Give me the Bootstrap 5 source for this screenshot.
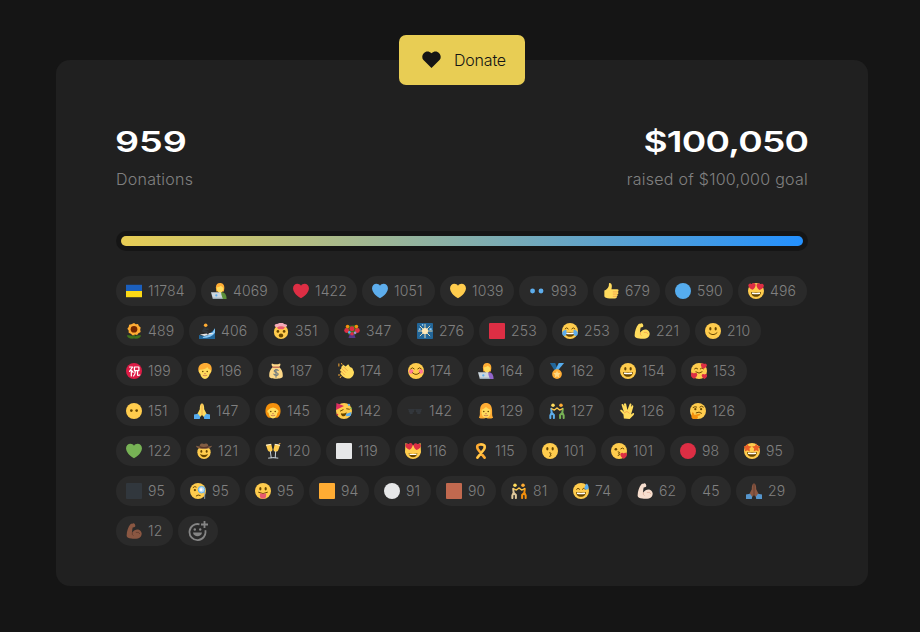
<!DOCTYPE html>
<html lang="en">
<head>
<meta charset="utf-8">
<meta name="viewport" content="width=device-width, initial-scale=1">
<title>Donations</title>
<link href="https://cdn.jsdelivr.net/npm/bootstrap@5.3.0/dist/css/bootstrap.min.css" rel="stylesheet">
<style>
  body { background: #151515; font-family: Inter, "Liberation Sans", sans-serif; font-weight: 300; color: #808080; padding: 60px 52px 46px 56px; overflow: hidden; }
  .panel { width: 812px; height: 526px; background: #202020; border-radius: 14px; padding: 0 60px; }
  .btn-donate { --bs-btn-bg: #e8cd54; --bs-btn-color: #151515; --bs-btn-border-width: 0; --bs-btn-border-radius: 7px; --bs-btn-hover-bg: #f0d860; width: 126px; height: 50px; margin-top: -25px; font-size: 16px; font-weight: 300; letter-spacing: -.2px; }
  .btn.btn-donate { padding: 0 0 1px 4px; }
  .btn-donate svg { width: 19px; height: 17px; margin-right: 13px; }
  .stats { padding-top: 39px; }
  .figure-num { color: #fff; font-weight: 620; font-size: 29px; line-height: 36px; display: block; white-space: nowrap; }
  .figure-num.start { transform: scaleX(1.3); transform-origin: left; margin-left: -1px; }
  .figure-num.end { transform: scaleX(1.28); transform-origin: right; letter-spacing: -.6px; }
  .figure-label { font-size: 16px; line-height: 24px; margin-top: 7px; letter-spacing: .26px; }
  .meter { height: 20px; padding: 5px; background: #151515; border-radius: 10px; margin-top: 40px; }
  .meter .progress-bar { height: 10px; border-radius: 5px; background: linear-gradient(90deg, #e8cd54, #2491ff); }
  .reactions { margin-top: 25px; column-gap: 5px; row-gap: 10px; }
  .chip { height: 30px; padding: 0 0 1px 10.300px; border-radius: 15px; background: #2a2a2a; font-size: 14px; letter-spacing: .15px; }
  .chip svg { width: 16px; height: 16px; margin: 1px 5.700px 0 0; flex: none; }
  .chip .add-icon { width: 20px; height: 20px; margin: 1px 0 0 -.5px; }
</style>
</head>
<body>
<main class="panel d-flex flex-column">
  <button type="button" class="btn btn-donate align-self-center d-flex align-items-center justify-content-center">
    <svg viewBox="0 0 20 18"><path fill="#151515" d="M10 18 1.500 9.600C-2.600 4.800 4.200-3.300 10 2.300c5.800-5.600 12.600 2.500 8.500 7.300z"/></svg>
    <span>Donate</span>
  </button>
  <div class="stats d-flex justify-content-between">
    <div><span class="figure-num start">959</span><div class="figure-label">Donations</div></div>
    <div class="text-end"><span class="figure-num end">$100,050</span><div class="figure-label">raised of $100,000 goal</div></div>
  </div>
  <div class="meter"><div class="progress-bar w-100" role="progressbar" aria-label="Goal progress"></div></div>
  <div class="reactions d-flex flex-wrap" id="reactions"></div>
</main>
<script>
const ball = '<circle cx="18" cy="18" r="18" fill="#ffcc4d"/>';
const eyes = '<g fill="#664500"><ellipse cx="12" cy="13" rx="2.500" ry="4"/><ellipse cx="24" cy="13" rx="2.500" ry="4"/></g>';
const grin = '<path fill="#664500" d="M7 20q11 3 22 0c0 6-4 11-11 11S7 26 7 20z"/><path fill="#fff" d="M9 21.500q9 2 18 0v3q-9 2-18 0z"/>';
const stroke = (d, c = '#664500', w = 2.2) => `<path d="${d}" fill="none" stroke="${c}" stroke-width="${w}" stroke-linecap="round" stroke-linejoin="round"/>`;
const heart = c => `<path fill="${c}" d="M35.885 11.833c0-5.450-4.418-9.868-9.867-9.868-3.308 0-6.227 1.633-8.018 4.129-1.791-2.496-4.710-4.129-8.017-4.129-5.450 0-9.868 4.417-9.868 9.868 0 .772.098 1.520.266 2.241C1.751 22.587 11.216 31.568 18 34.034c6.783-2.466 16.249-11.447 17.617-19.959.17-.721.268-1.469.268-2.242z"/>`;
const place = (x, y, s, art, r = 0) => `<g transform="translate(${x} ${y}) rotate(${r}) scale(${s})">${art}</g>`;
const disc = c => `<circle cx="18" cy="18" r="18" fill="${c}"/>`;
const square = c => `<rect width="36" height="36" rx="2" fill="${c}"/>`;
const star = '<path fill="#e95f28" d="M9 1l3 6 7 1-5 5 1 7-6-3-6 3 1-7-5-5 7-1z"/>';
const biceps = (c, s) => `<path fill="${c}" d="M15.500 1.200C17 .2 19 1 20 2.800l1 3.500c0 2-1 3-3 3.400l-3 .5c-1 4-1.500 8-1 11.500 4-6 10-8.500 15-6.500 7 3 8 11 4 15.500C29 35.500 20 36 12 35c-6-.8-10-2-10.500-6C1 20 5 9 9.500 3.500c1.500-1.800 4-1.800 6-2.300z"/>${stroke('M14 22q-1 4 2 6M23 21q7-2 8 3', s, 1.500)}`;
const pray = (c, s, b) => `<path fill="${c}" d="M17 1c-3 1-4 7-4 13L7 26l5 7 6-6 6 6 5-7-6-12c0-6-1-12-4-13z"/>${stroke('M18 3v23', s, 1.500)}<path fill="${b}" d="M0 26l9-2 5 7-1 5H0zM36 26l-9-2-5 7 1 5h13z"/>`;
const features = '<circle cx="13" cy="19" r="1.800" fill="#664500"/><circle cx="23" cy="19" r="1.800" fill="#664500"/>' + stroke('M14 28q4 2 8 0M17 24h2', '#c1694f', 1.800);
const coder = (hair, coat) => `<path fill="${coat}" d="M12 36c0-11 5-15 11-15s12 3 12 15z"/><path fill="${hair}" d="M11 10C11 3 15 0 20 0s10 3 10 11l-1 8H12z"/><path fill="#ffdc5d" d="M13 10q7-1 9-4l6 5c0 6-3 9-5 10v4h-5v-4c-3-1-5-5-5-11z"/><path fill="#ccd6dd" d="M0 21h22l4 14H4z"/><path fill="#9aaab4" d="M4 33h22v3H4z"/><circle cx="12" cy="28" r="2.500" fill="#5dadec"/>`;
const wrestle = (a, b) => `<g fill="none" stroke-linecap="round" stroke-linejoin="round" stroke-width="4.500"><path stroke="${a}" d="M5 13l1 9-3 6v6M6 22l5 5v7"/><path stroke="${b}" d="M31 13l-1 9 3 6v6M30 22l-5 5v7"/><path stroke="#ffcc4d" stroke-width="3" d="M6 13l6 3 6-5M30 13l-6 3-6-5"/></g><circle cx="9" cy="5" r="4" fill="#ffdc5d"/><circle cx="27" cy="5" r="4" fill="#ffac33"/>`;
const heartEyes = place(0, 1, .46, heart('#dd2e44'), -8) + place(20, -1, .46, heart('#dd2e44'), 8);

const art = {
  flag: '<path fill="#1b5fbd" d="M0 4h36v14H0z"/><path fill="#fbd916" d="M0 18h36v14H0z"/>',
  coderMan: coder('#ffac33', '#5c913b'), coderWoman: coder('#ffac33', '#9266cc'),
  red: heart('#dd2e44'), blue: heart('#5dadec'), gold: heart('#ffcc4d'), green: heart('#77b255'),
  dots: '<circle cx="8" cy="18" r="5.500" fill="#5dadec"/><circle cx="27" cy="18" r="5.500" fill="#5dadec"/>',
  thumb: '<path fill="#ffdb5e" d="M3 17c4 0 8-5 10-10 1-4-1-7 2-7 5 0 6 7 4 14h13c4 0 4 5 1 6 3 1 2 5-1 5 2 2 1 5-1 5 1 3-1 5-4 5H15C8 35 4 33 3 30z"/>' + stroke('M23 20h9M23 25h8M23 30h7', '#ee9547', 1.500),
  blueDisc: disc('#55acee'), whiteDisc: disc('#e6e7e8'), redDisc: disc('#dd2e44'),
  loveEyes: ball + heartEyes + grin,
  sunflower: '<path fill="#3e721d" d="M16 18h4v15h-4z"/><path fill="#3e721d" d="M18 35C8 36 3 33 2 28c7-1 13 0 16 5 3-5 9-6 16-5-1 5-6 8-16 7z"/><path fill="#ffac33" d="M18 0l4 3 5-1 2 5 4 3-1 5 1 5-5 3-3 4-5-1-5 2-4-4-5-2v-5l-3-4 3-4 1-5 5-1z"/><circle cx="18" cy="14" r="7.500" fill="#732700"/>',
  surfer: '<path fill="#269" d="M0 27l10 2q16-4 26-17v24H0z"/><path fill="#88c9f9" d="M10 31Q28 29 36 12v10Q28 34 8 34z"/><path fill="#e6e7e8" d="M2 26l27-4 3 2-20 5z"/>' + stroke('M14 11l-5 7 9 2 2 4M12 15l8-1', '#31373d', 4) + '<circle cx="15" cy="5" r="4" fill="#ffac33"/>',
  explode: '<circle cx="18" cy="20" r="16" fill="#ffcc4d"/><path fill="#f4abba" d="M6 9C0 5 7 1 11 2c4-4 12-3 14 0 7 0 9 5 4 7l-7-1-4 2-5-2-4 2z"/><path fill="#ea596e" d="M9 10q9-5 18 0l-4 4H12z"/><circle cx="11" cy="19" r="3" fill="#664500"/><circle cx="25" cy="19" r="3" fill="#664500"/><ellipse cx="18" cy="28" rx="5" ry="4.500" fill="#664500"/>',
  bouquet: '<path fill="#3e721d" d="M2 12l8-6 16-1 8 8-9 14H11z"/><path fill="#553788" d="M13 25h10l3 9H10z"/><g fill="#dd2e44"><circle cx="6" cy="17" r="5.500"/><circle cx="30" cy="17" r="5.500"/><circle cx="18" cy="13" r="5.500"/><circle cx="18" cy="24" r="4"/></g><circle cx="8" cy="8" r="4" fill="#f4900c"/><circle cx="28" cy="8" r="4" fill="#f4900c"/><circle cx="12" cy="21" r="3" fill="#55acee"/><circle cx="25" cy="22" r="3" fill="#aa8dd8"/>',
  sparkler: square('#226699') + stroke('M18 18V3M18 18v15M18 18H3M18 18h16M18 18L7 7M18 18L29 7M18 18L7 29M18 18l11 11', '#ffe8b6', 2) + '<circle cx="18" cy="18" r="7" fill="#ffe8b6"/><path d="M4 12h4v4H4zM28 12h5v4h-5zM11 2h3v4h-3z" fill="#88c9f9"/>',
  redSquare: square('#dd2e44'), whiteSquare: square('#e6e7e8'), darkSquare: square('#31373d'), orangeSquare: square('#ffac33'), brownSquare: square('#c1694f'),
  joy: ball + stroke('M7 13q4-5 7 0M22 13q3-5 7 0') + grin + '<path fill="#5dadec" d="M10 16C3 15-1 21 1 26s8 4 9-1zM26 16c7-1 11 5 9 10s-8 4-9-1z"/>',
  biceps: biceps('#ffdc5d', '#ef9645'), bicepsLight: biceps('#f7dece', '#d8a18d'), bicepsDark: biceps('#8a5742', '#583529'),
  smile: ball + eyes + stroke('M9 22q9 9 18 0'),
  congrats: disc('#dd1c46') + stroke('M8 9h7l-7 10M12 13v16M14 18l2 3M19 9h10v8H19zM21 18q0 8-4 11M26 18v9q0 2 5 0', '#fff', 2.800),
  man: '<path fill="#ffac33" d="M3 16C2 5 10 0 19 0s15 5 14 16l-3 8H6z"/><path fill="#ffdc5d" d="M6 15q13 0 17-6 2 5 7 6c4 2 2 7-1 7-1 9-6 14-11 14S8 31 7 22c-3 0-5-5-1-7z"/>' + features,
  personRed: '<path fill="#f4900c" d="M18 0C29 0 35 8 35 18c0 8-4 14-8 15H9C5 32 1 26 1 18 1 8 7 0 18 0z"/><path fill="#ffdc5d" d="M7 16q5-6 11-6t11 6c3 3 1 6-1 6-1 8-5 13-10 13S9 30 8 22c-3 0-4-4-1-6z"/>' + features,
  woman: '<path fill="#ffac33" d="M2 33C6 27 3 20 5 12 7-4 29-4 31 12c2 8-1 15 3 21q-8 4-16 0-8 4-16 0z"/><path fill="#ffdc5d" d="M8 15q5-1 10-6 5 5 10 6v8c-1 7-5 10-10 10S9 30 8 23z"/>' + features,
  bag: '<path fill="#fdd888" d="M11 9c-3-3-4-6-2-8q9 4 18 0c2 2 1 5-2 8 7 6 9 13 8 22-1 6-29 6-30 0C2 22 4 15 11 9z"/><path fill="#bf6952" d="M10 8h16v3H10z"/>' + stroke('M23 17c-3-4-10-2-9 2 1 3 9 2 9 6s-8 4-10 0M18 14v18', '#67757f', 2.400),
  clap: '<path fill="#ffdc5d" d="M8 8l4-4 5 4 6-5 4 6 5 2 4 9c0 9-7 16-15 15C14 34 5 26 5 22l3-2-4-4 3-3z"/>' + stroke('M9 13l8 8M13 9l8 8M7 19l8 8', '#ef9645', 1.700) + stroke('M2 2v5M8 1l1 2M1 27h3M5 33l2-3', '#ffac33', 2.200),
  blush: ball + '<circle cx="7" cy="19" r="5" fill="#ff7892"/><circle cx="29" cy="19" r="5" fill="#ff7892"/>' + stroke('M6 13q4-5 8 0M22 13q4-5 8 0M10 22q8 8 16 0'),
  medal: '<path fill="#269" d="M2 0h12l6 15-6 4z"/><path fill="#55acee" d="M34 0H22l-9 18h6z"/><circle cx="18" cy="25" r="11" fill="#ffac33"/><path fill="#ffd983" d="M18 17l2 5 6 1-4 4 1 6-5-3-5 3 1-6-4-4 6-1z"/>',
  grinning: ball + eyes + grin,
  adore: ball + stroke('M8 13q3-4 7 0M21 13q3-4 7 0M11 20q7 6 14 0') + place(23, -1, .38, heart('#dd2e44'), 10) + place(-1, 21, .42, heart('#dd2e44')) + place(24, 24, .35, heart('#dd2e44')),
  mute: ball + '<circle cx="12" cy="17" r="3" fill="#664500"/><circle cx="24" cy="17" r="3" fill="#664500"/>',
  pray: pray('#ffdc5d', '#ef9645', '#55acee'), prayDark: pray('#8a5742', '#583529', '#5595cc'),
  party: ball + '<path fill="#dd2e60" d="M0 16L1 0l17 7z"/>' + stroke('M10 18l6-3M24 13l6 1') + '<path fill="#664500" d="M11 23q8 2 13-2c0 5-3 9-7 9-3 0-6-3-6-7z"/><path fill="#5dadec" d="M22 25l13-5-2 9-10 1z"/><circle cx="29" cy="4" r="2.500" fill="#55acee"/><circle cx="34" cy="12" r="2" fill="#77b255"/><circle cx="3" cy="26" r="2" fill="#dd2e44"/>',
  glasses: '<path fill="#33373c" d="M4 14h12v7h-3v4H6v-4H4zM20 14h12v7h-2v4h-7v-4h-3z"/><path fill="#33373c" d="M2 14h32v2H2z"/>',
  wrestleBlue: wrestle('#5dadec', '#77b255'), wrestleOrange: wrestle('#e1c99b', '#f4900c'),
  vulcan: '<path fill="#ffdc5d" d="M11 35l-1-9-7-8c-1-3 2-4 4-2l4 4L6 5c-1-3 3-4 4-1l2 4-1-6c1-2 4-2 5 0l3 14 5-14c1-2 4-1 4 1l-1 6 2-3c2-2 4 0 3 3l-5 17 4-3c3-1 4 1 2 4l-9 9z"/>' + stroke('M12 22l6-3 5 4', '#ef9645', 1.500),
  think: ball + stroke('M7 10q4-3 8-1M22 9q4-4 8 0M14 22q7-4 12 1') + '<circle cx="12" cy="14" r="2.500" fill="#664500"/><circle cx="25" cy="14" r="2.500" fill="#664500"/><path fill="#f4900c" d="M5 21l3 1 2 5 11-3c3 0 3 4 0 4l-4 1 1 4-4 4H7l-4-5z"/>',
  cowboy: '<circle cx="18" cy="21" r="15" fill="#ffcc4d"/><g fill="#664500"><ellipse cx="12" cy="19" rx="2.200" ry="3"/><ellipse cx="24" cy="19" rx="2.200" ry="3"/><path d="M9 25q9 4 18 0-2 7-9 7t-9-7z"/></g><path fill="#825d43" d="M0 6q6 1 8 2Q9 0 14 1q4 2 8 0 5-1 6 7 2-1 8-2c-1 9-35 10-36 0z"/><path fill="#583529" d="M8 7q10 4 20 0v3q-10 4-20 0z"/>',
  toast: '<path fill="#ffcc4d" d="M2 4l12-2 3 13c0 5-9 7-11 1zM22 2l12 2-4 12c-2 6-11 4-11-1z"/>' + stroke('M12 19l2 14M8 34l10-1M24 19l-1 14M19 33l10 1', '#ccd6dd', 2.200) + stroke('M3 5l10-2M23 3l10 2', '#fff', 1.800) + stroke('M32 1l3-1', '#ffac33', 2),
  catLove: '<path fill="#ffcc4d" d="M1 0l10 5h14L35 0l1 21q-4 15-18 15T0 21z"/>' + heartEyes + '<path fill="#664500" d="M8 23q10 3 20 0c-1 6-5 9-10 9S9 29 8 23z"/><path fill="#fff" d="M10 24q8 2 16 0v3H10z"/>',
  ribbon: stroke('M10 33L25 14C29 6 24 3 18 3S7 6 11 14l15 19', '#ffac33', 6) + stroke('M10 33L25 14C29 6 24 3 18 3', '#ffcc4d', 4),
  kiss: ball + eyes + stroke('M17 22q7 1 1 4 6 2-1 4'),
  heartKiss: ball + '<circle cx="11" cy="14" r="3" fill="#664500"/>' + stroke('M22 13q4-4 7 0M16 20q7 1 1 4 6 2-1 4') + place(21, 21, .42, heart('#dd2e44')),
  starEyes: ball + grin + place(-1, 0, .95, star) + place(19, 0, .95, star),
  monocle: ball + stroke('M7 10q4-4 7-1M14 29q4-4 9-1') + '<circle cx="11" cy="16" r="2.500" fill="#664500"/><circle cx="26" cy="15" r="7.500" fill="#bdddf4" stroke="#55acee" stroke-width="2"/><circle cx="25" cy="15" r="3" fill="#fff"/>' + stroke('M33 20v15', '#9aaab4', 2),
  tongue: ball + eyes + stroke('M8 21q10 6 20 0') + '<path fill="#e75a70" d="M11 23q7 2 14 0v7c0 7-14 7-14 0z"/>',
  sweat: ball + stroke('M8 14q3-5 7 0M21 14q3-5 7 0') + grin + '<path fill="#5dadec" d="M31 1c-7 8-7 14-1 14s7-7 1-14z"/>'
};

// icon, count, chip width
const reactions = [
  ['flag', 11784, 80], ['coderMan', 4069, 77], ['red', 1422, 74], ['blue', 1051, 73], ['gold', 1039, 74], ['dots', 993, 69], ['thumb', 679, 67], ['blueDisc', 590, 68], ['loveEyes', 496, 69],
  ['sunflower', 489, 68], ['surfer', 406, 69], ['explode', 351, 66], ['bouquet', 347, 68], ['sparkler', 276, 67], ['redSquare', 253, 68], ['joy', 253, 67], ['biceps', 221, 66], ['smile', 210, 66],
  ['congrats', 199, 66], ['man', 196, 66], ['bag', 187, 65], ['clap', 174, 65], ['blush', 174, 65], ['coderWoman', 164, 66], ['medal', 162, 66], ['grinning', 154, 66], ['adore', 153, 66],
  ['mute', 151, 63], ['pray', 147, 66], ['personRed', 145, 66], ['party', 142, 66], ['glasses', 142, 66], ['woman', 129, 66], ['wrestleBlue', 127, 65], ['vulcan', 126, 66], ['think', 126, 66],
  ['green', 122, 65], ['cowboy', 121, 64], ['toast', 120, 66], ['whiteSquare', 119, 64], ['catLove', 116, 63], ['ribbon', 115, 64], ['kiss', 101, 64], ['heartKiss', 101, 64], ['redDisc', 98, 59], ['starEyes', 95, 60],
  ['darkSquare', 95, 59], ['monocle', 95, 60], ['tongue', 95, 59], ['orangeSquare', 94, 60], ['whiteDisc', 91, 57], ['brownSquare', 90, 60], ['wrestleOrange', 81, 57], ['sweat', 74, 59], ['bicepsLight', 62, 59], [null, 45, 40], ['prayDark', 29, 60],
  ['bicepsDark', 12, 57]
];
const chips = reactions.map(([icon, n, w]) => `<div class="chip d-flex align-items-center${icon ? '' : ' ps-0 justify-content-center'}" style="width:${w}px">${icon ? `<svg viewBox="0 0 36 36">${art[icon]}</svg>` : ''}<span>${n}</span></div>`);
chips.push('<div class="chip d-flex align-items-center" style="width:40px"><svg class="add-icon" viewBox="0 0 20 20" fill="none" stroke="#858585" stroke-width="1.800"><path d="M11.500 3.300a8 8 0 1 0 5.800 6"/><path d="M16.500 0v7M13 3.500h7"/><path fill="#858585" stroke="none" d="M5 11.500h9c-.5 5-8.500 5-9 0z"/><circle cx="6.800" cy="8.500" r="1.200" fill="#858585" stroke="none"/><circle cx="12.200" cy="8.500" r="1.200" fill="#858585" stroke="none"/></svg></div>');
document.getElementById('reactions').innerHTML = chips.join('');
</script>
<script src="https://cdn.jsdelivr.net/npm/bootstrap@5.3.0/dist/js/bootstrap.bundle.min.js"></script>
</body>
</html>
